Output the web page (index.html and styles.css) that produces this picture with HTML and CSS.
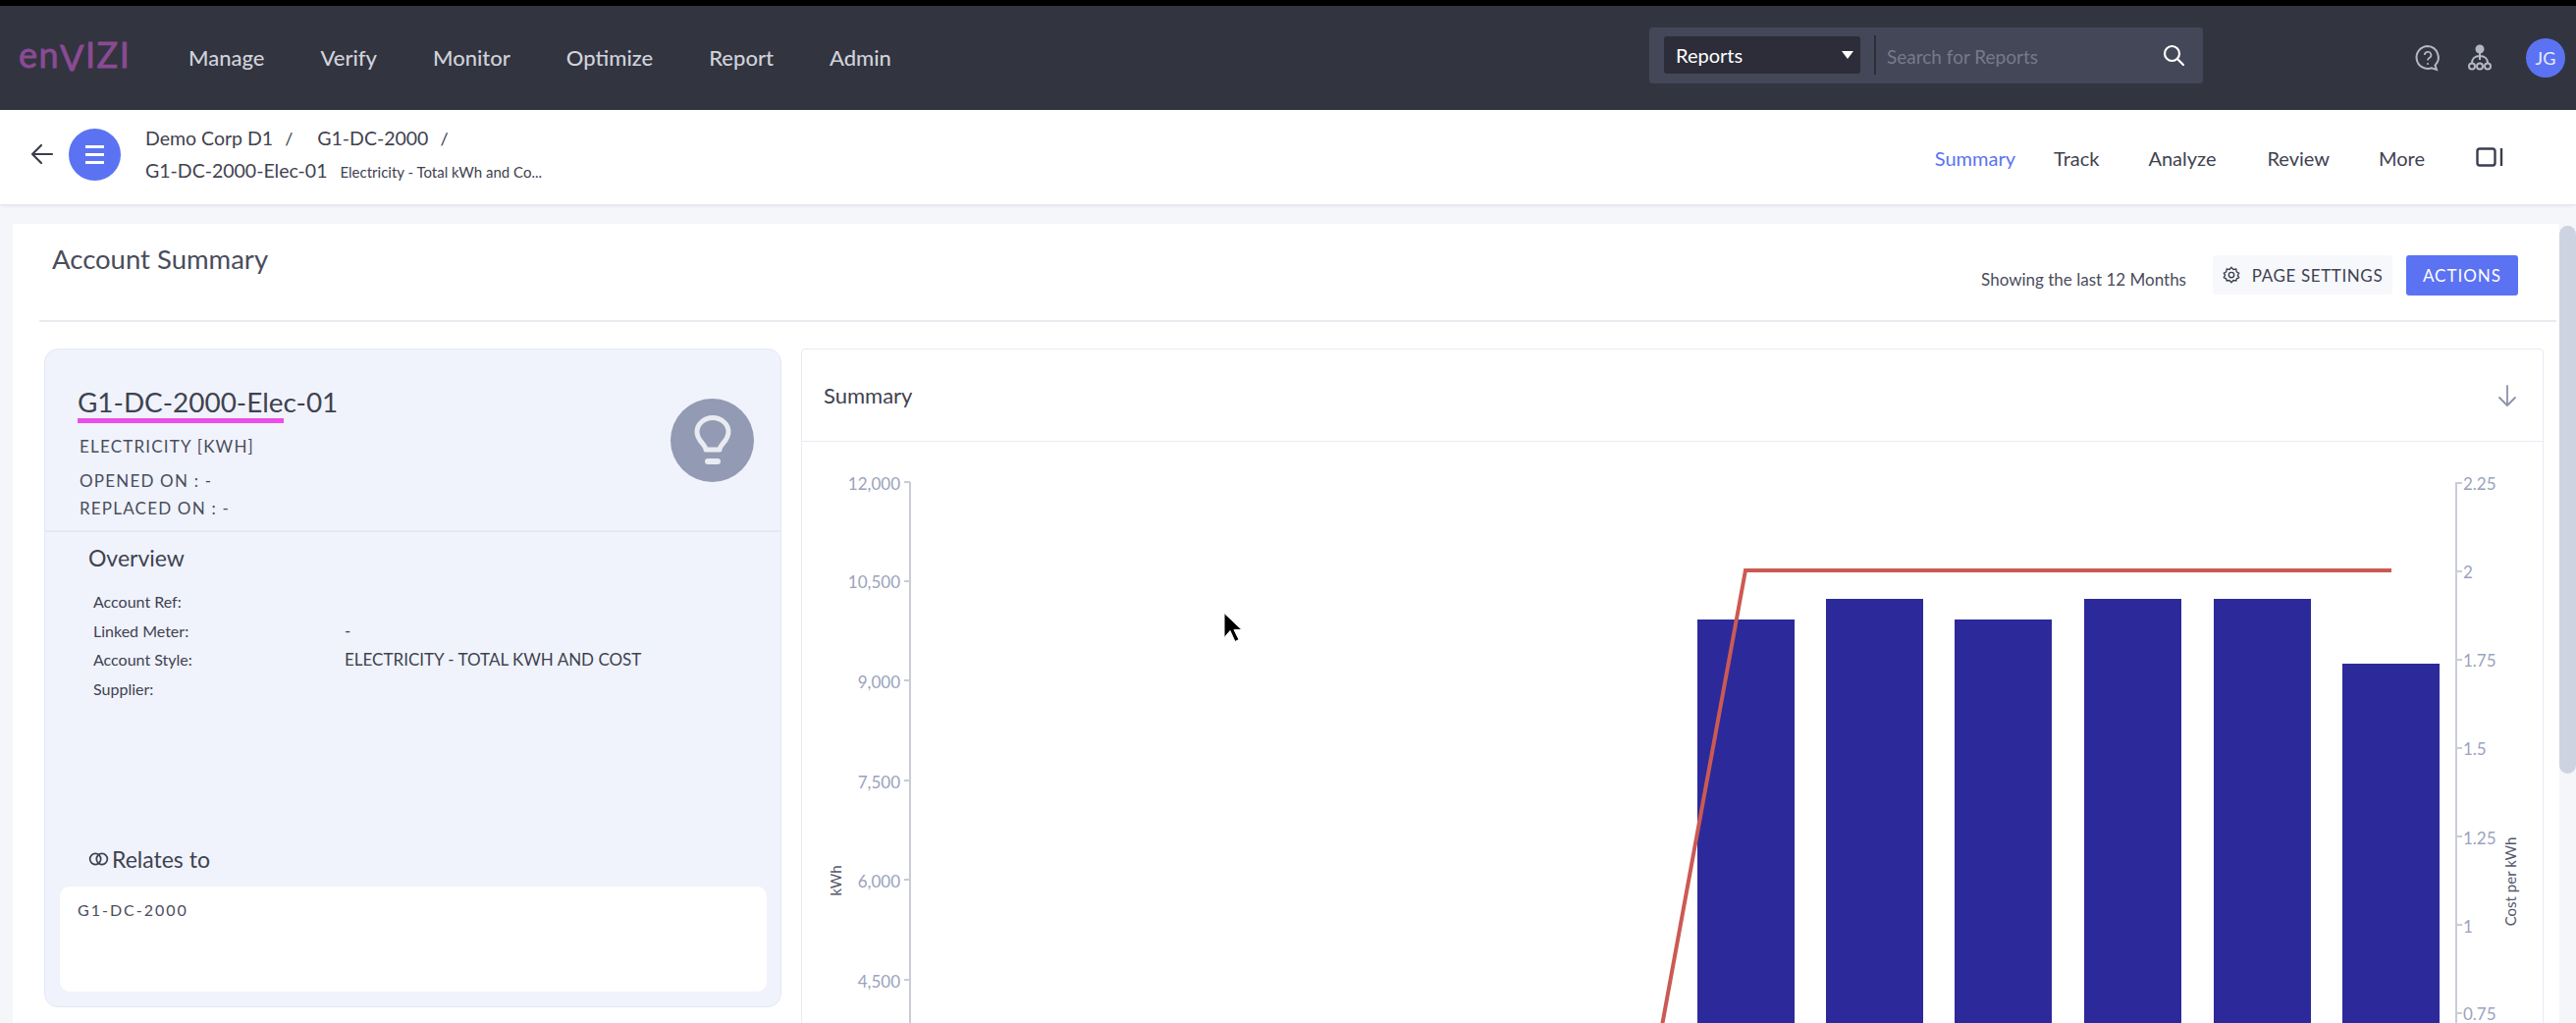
FILE: index.html
```html
<!DOCTYPE html>
<html lang="en">
<head>
<meta charset="utf-8">
<title>Account Summary</title>
<link rel="stylesheet" href="styles.css">
</head>
<body>
<header class="topbar">
  <div class="logo">en<span class="logo-v">V</span>IZI</div>
  <nav class="mainnav">
    <a>Manage</a><a>Verify</a><a>Monitor</a><a>Optimize</a><a>Report</a><a>Admin</a>
  </nav>
  <div class="search">
    <div class="search-select"><span>Reports</span><i class="caret"></i></div>
    <div class="search-divider"></div>
    <div class="search-input">Search for Reports</div>
    <svg class="search-icon" viewBox="0 0 24 24" width="24" height="24" fill="none" stroke="#fff" stroke-width="2.2" stroke-linecap="round"><circle cx="10.5" cy="10.5" r="7.5"/><path d="M16 16l6 6"/></svg>
  </div>
  <div class="top-icons">
    <svg viewBox="0 0 28 30" width="28" height="30" fill="none" stroke="#b4b7c4" stroke-width="2"><path d="M14 3a11.500 11.500 0 1 0 4 22.300l5 1.700-1.500-4.500A11.500 11.500 0 0 0 14 3z"/><path d="M10.800 12a3.300 3.300 0 1 1 4.800 3c-1.100.6-1.600 1.300-1.600 2.500" stroke-width="1.700"/><circle cx="14" cy="21" r="1" fill="#b4b7c4" stroke="none"/></svg>
    <svg viewBox="0 0 26 28" width="26" height="28" fill="none" stroke="#b4b7c4" stroke-width="2"><circle cx="13" cy="5" r="3.500" fill="#b4b7c4"/><path d="M13 8v8M13 12c-5 0-8 3-8 7M13 12c5 0 8 3 8 7"/><circle cx="5" cy="22.500" r="3"/><circle cx="13" cy="22.500" r="3"/><circle cx="21" cy="22.500" r="3"/></svg>
    <div class="avatar">JG</div>
  </div>
</header>

<div class="subbar">
  <svg class="back" viewBox="0 0 24 24" width="24" height="24" fill="none" stroke="#3b3e4d" stroke-width="2.200" stroke-linecap="round" stroke-linejoin="round"><path d="M22 12H2M11 3l-9 9 9 9"/></svg>
  <div class="menu-btn"><i></i><i></i><i></i></div>
  <div class="crumbs">
    <div class="crumb-row">
      <span class="crumb">Demo Corp D1</span><span class="slash">/</span>
      <span class="crumb crumb-second">G1-DC-2000</span><span class="slash">/</span>
    </div>
    <div class="crumb-row">
      <span class="crumb">G1-DC-2000-Elec-01</span><span class="crumb-sub">Electricity - Total kWh and Co...</span>
    </div>
  </div>
  <nav class="tabs">
    <a class="tab active">Summary</a><a class="tab">Track</a><a class="tab">Analyze</a><a class="tab">Review</a><a class="tab">More</a>
    <svg class="panel-icon" viewBox="0 0 28 20" width="28" height="20" fill="none" stroke="#3b3e4d" stroke-width="2.400"><rect x="1.500" y="1.500" width="18" height="17" rx="2.500"/><path d="M26 1v18"/></svg>
  </nav>
</div>

<main class="page">
  <section class="sheet">
    <div class="sheet-head">
      <h1>Account Summary</h1>
      <div class="sheet-actions">
        <span class="showing">Showing the last 12 Months</span>
        <button class="btn-ghost">
          <svg viewBox="0 0 20 20" width="18" height="18" fill="none" stroke="#3b3e4d" stroke-width="1.500"><path d="M10 1.500l2.200 2.300 3.100-.4.500 3.100 2.700 1.500-1.400 2.500 1.400 2.500-2.700 1.500-.5 2.100-3.100-.4L10 18.500l-2.200-2.300-3.100.4-.5-2.100-2.700-1.500L2.900 10 1.500 8l2.700-1.500.5-3.100 3.100.4z"/><circle cx="10" cy="10" r="3"/></svg>
          PAGE SETTINGS
        </button>
        <button class="btn-primary">ACTIONS</button>
      </div>
    </div>

    <div class="columns">
      <aside class="account">
        <div class="account-top">
          <div class="account-info">
            <h2>G1-DC-2000-Elec-01</h2>
            <div class="underline"></div>
            <p class="meta meta-type">ELECTRICITY [KWH]</p>
            <p class="meta meta-open">OPENED ON : -</p>
            <p class="meta meta-replaced">REPLACED ON : -</p>
          </div>
          <div class="bulb">
            <svg viewBox="0 0 38 52" width="38" height="52" fill="none" stroke="#e9ebf2" stroke-width="5" stroke-linecap="round" stroke-linejoin="round"><path d="M12 35c0-5-9-9-9-18a16 14.500 0 0 1 32 0c0 9-9 13-9 18z"/><path d="M14 47h10" stroke-width="6"/></svg>
          </div>
        </div>
        <div class="overview">
          <h3>Overview</h3>
          <dl class="facts">
            <dt>Account Ref:</dt><dd></dd>
            <dt>Linked Meter:</dt><dd>-</dd>
            <dt>Account Style:</dt><dd>ELECTRICITY - TOTAL KWH AND COST</dd>
            <dt>Supplier:</dt><dd></dd>
          </dl>
        </div>
        <div class="relates">
          <h3 class="relates-title">
            <svg viewBox="0 0 22 14" width="21" height="14" fill="none" stroke="#3f4250" stroke-width="1.800"><circle cx="7.500" cy="7" r="5.800"/><circle cx="14.500" cy="7" r="5.800"/></svg>
            Relates to
          </h3>
          <div class="relates-box">G1-DC-2000</div>
        </div>
      </aside>

      <section class="chart-card">
        <div class="chart-head">
          <span>Summary</span>
          <svg viewBox="0 0 20 24" width="20" height="24" fill="none" stroke="#8b92a8" stroke-width="1.800" stroke-linecap="round" stroke-linejoin="round"><path d="M10 2v20M2 14l8 8 8-8"/></svg>
        </div>
        <svg class="chart" viewBox="817 449 1774 600" width="1774" height="600">
          <g class="axis">
            <path d="M927 490V1049M921 490h6M921 591h6M921 692h6M921 794h6M921 895h6M921 997h6"/>
            <path d="M2502 490V1049M2502 491h6M2502 581h6M2502 671h6M2502 761h6M2502 851h6M2502 941h6M2502 1031h6"/>
          </g>
          <g class="tick tick-left">
            <text x="917" y="498">12,000</text>
            <text x="917" y="598">10,500</text>
            <text x="917" y="700">9,000</text>
            <text x="917" y="802">7,500</text>
            <text x="917" y="903">6,000</text>
            <text x="917" y="1005">4,500</text>
          </g>
          <g class="tick">
            <text x="2509" y="498">2.25</text>
            <text x="2509" y="588">2</text>
            <text x="2509" y="678">1.75</text>
            <text x="2509" y="768">1.5</text>
            <text x="2509" y="859">1.25</text>
            <text x="2509" y="949">1</text>
            <text x="2509" y="1038">0.75</text>
          </g>
          <text class="axis-title" transform="translate(857 896) rotate(-90)">kWh</text>
          <text class="axis-title" transform="translate(2563 897) rotate(-90)">Cost per kWh</text>
          <g class="bars">
            <rect x="1729" y="630" width="99" height="420"/>
            <rect x="1860" y="609" width="99" height="440"/>
            <rect x="1991" y="630" width="99" height="420"/>
            <rect x="2123" y="609" width="99" height="440"/>
            <rect x="2255" y="609" width="99" height="440"/>
            <rect x="2386" y="675" width="99" height="375"/>
          </g>
          <path class="series-line" d="M1690 1060L1778 580H2436"/>
        </svg>
      </section>
    </div>
  </section>
</main>

<div class="scrollbar"></div>
<svg class="cursor" viewBox="0 0 20 32" width="20" height="33"><path d="M2 1v25l6-7 5 11 4-2-5-10h8z" fill="#000" stroke="#fff" stroke-width="1"/></svg>
</body>
</html>
```
FILE: styles.css
```css
* { box-sizing: border-box; }
html, body { margin: 0; height: 1042px; overflow: hidden; }
body {
  position: relative;
  background: #f5f6fa;
  font-family: "Lato", "Noto Sans", sans-serif;
  color: #3f4250;
}
h1, h2, h3, p, dl, dd { margin: 0; font-weight: 400; }

.topbar {
  height: 112px;
  border-top: 6px solid #000;
  background: #32343f;
  display: flex;
  align-items: center;
  padding-left: 19px;
}
.logo {
  width: 173px;
  font-size: 36px;
  font-weight: 400;
  -webkit-text-stroke: .8px #8a4b93;
  line-height: 1;
  letter-spacing: 1.500px;
  color: #8a4b93;
  margin-top: -8px;
}
.logo-v { display: inline-block; transform: translateY(3px); }
.mainnav { display: flex; gap: 57px; width: 1488px; margin-top: -2px; }
.mainnav a { font-size: 22px; font-weight: 500; color: #d0d2da; }
.search {
  width: 564px;
  height: 57px;
  margin-top: -6px;
  padding-left: 15px;
  background: #444757;
  border-radius: 3px;
  display: flex;
  align-items: center;
}
.search-select {
  width: 200px;
  height: 38px;
  padding: 0 7px 0 12px;
  background: #2c2d38;
  border-radius: 3px;
  color: #fff;
  font-size: 20px;
  display: flex;
  align-items: center;
  justify-content: space-between;
}
.caret { border: 6px solid transparent; border-top: 8px solid #fff; border-bottom: 0; }
.search-divider { width: 2px; height: 40px; margin-left: 14px; background: #2c2d38; }
.search-input { margin: 3px 0 0 11px; flex: 1; font-size: 19px; color: #767a8b; }
.search-icon { margin-right: 18px; }
.top-icons { margin-left: 215px; display: flex; align-items: center; }
.top-icons svg:nth-child(2) { margin-left: 26px; }
.avatar {
  width: 40px;
  height: 40px;
  margin-left: 34px;
  border-radius: 50%;
  background: #5b73f2;
  color: #e8ebff;
  font-size: 18px;
  display: flex;
  align-items: center;
  justify-content: center;
}

.subbar {
  height: 96px;
  background: #fff;
  box-shadow: 0 1px 4px rgba(40, 44, 70, .12);
  display: flex;
  align-items: center;
  padding-left: 31px;
  position: relative;
}
.back { margin-top: -6px; }
.menu-btn {
  width: 53px;
  height: 53px;
  margin-left: 15px;
  margin-top: -6px;
  border-radius: 50%;
  background: #5b73f2;
  display: flex;
  flex-direction: column;
  align-items: center;
  justify-content: center;
  gap: 5px;
}
.menu-btn i { width: 19px; height: 3px; background: #fff; display: block; }
.crumbs { margin-left: 25px; display: flex; flex-direction: column; gap: 8px; margin-top: -6px; }
.crumb-row { display: flex; align-items: baseline; height: 25px; line-height: 25px; }
.crumb { font-size: 19.500px; color: #3f4250; }
.slash { font-size: 18px; margin-left: 12px; color: #3f4250; }
.crumb-second { margin-left: 25px; }
.crumb-sub { margin-left: 13px; font-size: 15px; }
.tabs { margin-left: auto; display: flex; align-items: center; margin-right: 74px; padding-top: 2px; }
.tab { font-size: 20px; color: #3f4250; }
.tab:nth-child(1) { margin-right: 39px; }
.tab:nth-child(2) { margin-right: 50px; }
.tab:nth-child(3) { margin-right: 52px; }
.tab:nth-child(4) { margin-right: 50px; }
.tab:nth-child(5) { margin-right: 52px; }
.tab.active { color: #5b73f2; }
.panel-icon { margin-top: -2px; }

.page { padding: 20px 0 0 13px; }
.sheet {
  width: 2594px;
  height: 814px;
  background: #fff;
  padding: 0 3px 0 27px;
}
.sheet-head {
  height: 100px;
  margin-bottom: 27px;
  border-bottom: 2px solid #e8eaef;
  display: flex;
  justify-content: space-between;
}
.sheet-head h1 { font-size: 27.500px; padding: 19px 0 0 13px; color: #4a4d5b; }
.sheet-actions { display: flex; align-items: flex-start; padding-top: 32px; margin-right: 39px; }
.showing { font-size: 17px; line-height: 50px; margin-right: 27px; color: #4a4d5b; }
.btn-ghost {
  width: 183px;
  height: 40px;
  border: 0;
  border-radius: 4px;
  background: #f7f8fc;
  font: 17px "Lato", sans-serif;
  letter-spacing: .6px;
  color: #3f4250;
  display: flex;
  align-items: center;
  justify-content: center;
  gap: 12px;
  padding: 0;
}
.btn-primary {
  width: 114px;
  height: 41px;
  margin-left: 14px;
  border: 0;
  border-radius: 3px;
  background: #5b73f2;
  color: #fff;
  font: 17px "Lato", sans-serif;
  letter-spacing: 1px;
  padding: 0;
}

.columns { display: flex; gap: 20px; align-items: flex-start; margin-left: 5px; }
.account {
  width: 751px;
  height: 671px;
  flex: none;
  background: #f0f3fc;
  border: 1px solid #e4e8f3;
  border-radius: 14px;
  display: flex;
  flex-direction: column;
}
.account-top {
  height: 186px;
  padding: 36px 0 0 33px;
  border-bottom: 2px solid #e6e9f3;
  display: flex;
  justify-content: space-between;
}
.account h2 { font-size: 27.900px; line-height: 34px; color: #3f4250; }
.underline { width: 210px; height: 5px; background: #ee4de8; }
.meta { font-size: 17px; letter-spacing: 1.200px; color: #4a4d5b; margin-left: 2px; line-height: 24px; }
.meta-type { margin-top: 12px; }
.meta-open { margin-top: 11px; }
.meta-replaced { margin-top: 4px; }
.bulb {
  width: 85px;
  height: 85px;
  margin: 14px 27px 0 0;
  border-radius: 50%;
  background: #929bb3;
  display: flex;
  align-items: center;
  justify-content: center;
}
.overview { padding: 10px 0 0 44px; flex: 1; }
.overview h3 { font-size: 23px; line-height: 32px; color: #3f4250; }
.facts {
  margin: 14px 0 0 5px;
  display: grid;
  grid-template-columns: 256px 1fr;
  grid-auto-rows: 29.700px;
  font-size: 16px;
  line-height: 29.700px;
  color: #3f4250;
}
.facts dd { font-size: 17px; }
.relates { padding: 0 14px 15px 15px; }
.relates-title {
  font-size: 23px;
  line-height: 32px;
  margin-left: 29px;
  display: flex;
  align-items: center;
  gap: 3px;
}
.relates-box {
  height: 107px;
  margin-top: 12px;
  padding: 12px 18px;
  background: #fff;
  border-radius: 10px;
  font-size: 16px;
  letter-spacing: 2px;
  color: #4a4d5b;
  line-height: 24px;
}

.chart-card {
  width: 1775px;
  height: 720px;
  flex: none;
  border: 1px solid #e8ebf3;
  border-radius: 4px 4px 0 0;
  background: #fff;
}
.chart-head {
  height: 94px;
  padding: 0 26px 0 22px;
  border-bottom: 1px solid #e8ebf3;
  display: flex;
  align-items: center;
  justify-content: space-between;
  font-size: 22px;
  color: #3f4250;
}
.chart { display: block; }
.axis path { fill: none; stroke: #c9ccd4; stroke-width: 2; }
.tick text { font-size: 17px; fill: #9aa3bd; font-family: "Lato", sans-serif; }
.tick-left text { text-anchor: end; }
.axis-title { font-size: 15px; fill: #55586a; text-anchor: middle; font-family: "Lato", sans-serif; }
.bars rect { fill: #2c2a9b; }
.series-line { fill: none; stroke: #cb5a53; stroke-width: 4; }

.scrollbar {
  position: absolute;
  left: 2607px;
  top: 230px;
  width: 17px;
  height: 558px;
  border-radius: 9px;
  background: #cdd3e0;
}
.cursor { position: absolute; left: 1245px; top: 623px; }
```
